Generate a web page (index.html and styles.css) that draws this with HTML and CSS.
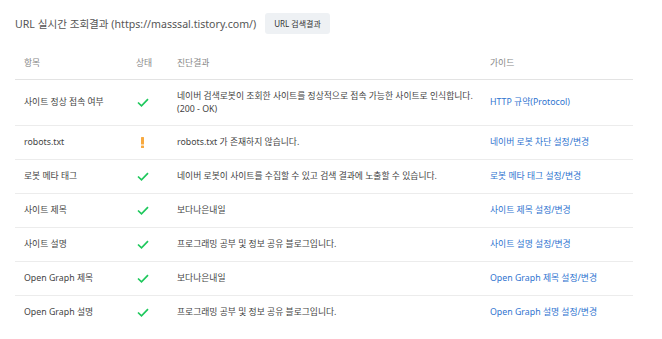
FILE: index.html
```html
<!DOCTYPE html>
<html lang="ko">
<head>
    <meta charset="UTF-8">
    <meta name="viewport" content="width=device-width, initial-scale=1.0">
    <title>URL 실시간 조회결과</title>
    <link rel="stylesheet" href="styles.css">
</head>
<body>
    <div class="container">
        <div class="title-row">
            <h2>URL 실시간 조회결과 (https://masssal.tistory.com/)</h2>
            <button type="button">URL 검색결과</button>
        </div>
        <table class="result-table">
            <thead>
                <tr>
                    <th class="col-item">항목</th>
                    <th class="col-state">상태</th>
                    <th class="col-result">진단결과</th>
                    <th class="col-guide">가이드</th>
                </tr>
            </thead>
            <tbody>
                <tr class="tall">
                    <td>사이트 정상 접속 여부</td>
                    <td><svg class="ok" width="12" height="9" viewBox="0 0 12 9"><polyline points="1,4.5 4.5,7.8 11,1.2"/></svg></td>
                    <td>네이버 검색로봇이 조회한 사이트를 정상적으로 접속 가능한 사이트로 인식합니다.<br>(200 - OK)</td>
                    <td><a href="#">HTTP 규약(Protocol)</a></td>
                </tr>
                <tr>
                    <td>robots.txt</td>
                    <td><svg class="warn" width="3" height="11" viewBox="0 0 3 11"><rect x="0" y="0" width="3" height="7.5" rx="0.5"/><rect x="0" y="8.6" width="3" height="2.4" rx="0.5"/></svg></td>
                    <td>robots.txt 가 존재하지 않습니다.</td>
                    <td><a href="#">네이버 로봇 차단 설정/변경</a></td>
                </tr>
                <tr>
                    <td>로봇 메타 태그</td>
                    <td><svg class="ok" width="12" height="9" viewBox="0 0 12 9"><polyline points="1,4.5 4.5,7.8 11,1.2"/></svg></td>
                    <td>네이버 로봇이 사이트를 수집할 수 있고 검색 결과에 노출할 수 있습니다.</td>
                    <td><a href="#">로봇 메타 태그 설정/변경</a></td>
                </tr>
                <tr>
                    <td>사이트 제목</td>
                    <td><svg class="ok" width="12" height="9" viewBox="0 0 12 9"><polyline points="1,4.5 4.5,7.8 11,1.2"/></svg></td>
                    <td>보다나은내일</td>
                    <td><a href="#">사이트 제목 설정/변경</a></td>
                </tr>
                <tr>
                    <td>사이트 설명</td>
                    <td><svg class="ok" width="12" height="9" viewBox="0 0 12 9"><polyline points="1,4.5 4.5,7.8 11,1.2"/></svg></td>
                    <td>프로그래밍 공부 및 정보 공유 블로그입니다.</td>
                    <td><a href="#">사이트 설명 설정/변경</a></td>
                </tr>
                <tr>
                    <td>Open Graph 제목</td>
                    <td><svg class="ok" width="12" height="9" viewBox="0 0 12 9"><polyline points="1,4.5 4.5,7.8 11,1.2"/></svg></td>
                    <td>보다나은내일</td>
                    <td><a href="#">Open Graph 제목 설정/변경</a></td>
                </tr>
                <tr class="last">
                    <td>Open Graph 설명</td>
                    <td><svg class="ok" width="12" height="9" viewBox="0 0 12 9"><polyline points="1,4.5 4.5,7.8 11,1.2"/></svg></td>
                    <td>프로그래밍 공부 및 정보 공유 블로그입니다.</td>
                    <td><a href="#">Open Graph 설명 설정/변경</a></td>
                </tr>
            </tbody>
        </table>
    </div>
</body>
</html>
```

FILE: styles.css
```css
body {
    margin: 0;
    font-family: "Noto Sans", "Noto Sans CJK KR", sans-serif;
    background-color: #fff;
    color: #444;
}
.container {
    padding: 13px 29px 0 15px;
}
.title-row {
    display: flex;
    align-items: center;
    gap: 9px;
}
.title-row h2 {
    margin: 0;
    font-size: 10.6px;
    font-weight: normal;
    color: #555;
}
.title-row button {
    height: 21px;
    padding: 0 9px;
    font-family: inherit;
    font-size: 8px;
    color: #333;
    background-color: #eef1f4;
    border: none;
    border-radius: 3px;
}
.result-table {
    width: 100%;
    margin-top: 11px;
    border-collapse: collapse;
    font-size: 8.8px;
}
.result-table th {
    height: 34px;
    padding: 0 0 0 9px;
    text-align: left;
    font-weight: normal;
    color: #888;
    border-bottom: 1px solid #e3e3e3;
}
.result-table td {
    height: 33px;
    padding: 0 0 0 9px;
    line-height: 13px;
    vertical-align: middle;
    border-bottom: 1px solid #ececec;
}
.result-table tr.tall td {
    height: 45px;
}
.result-table tr.last td {
    border-bottom: none;
}
.col-item { width: 103px; }
.col-state { width: 32px; }
.col-result { width: 304px; }
.result-table a {
    color: #2f74d0;
    text-decoration: none;
}
.ok {
    display: block;
    margin-left: 1px;
    fill: none;
    stroke: #1ec85c;
    stroke-width: 1.7;
}
.warn {
    display: block;
    margin-left: 5px;
    fill: #f7a940;
}
```
